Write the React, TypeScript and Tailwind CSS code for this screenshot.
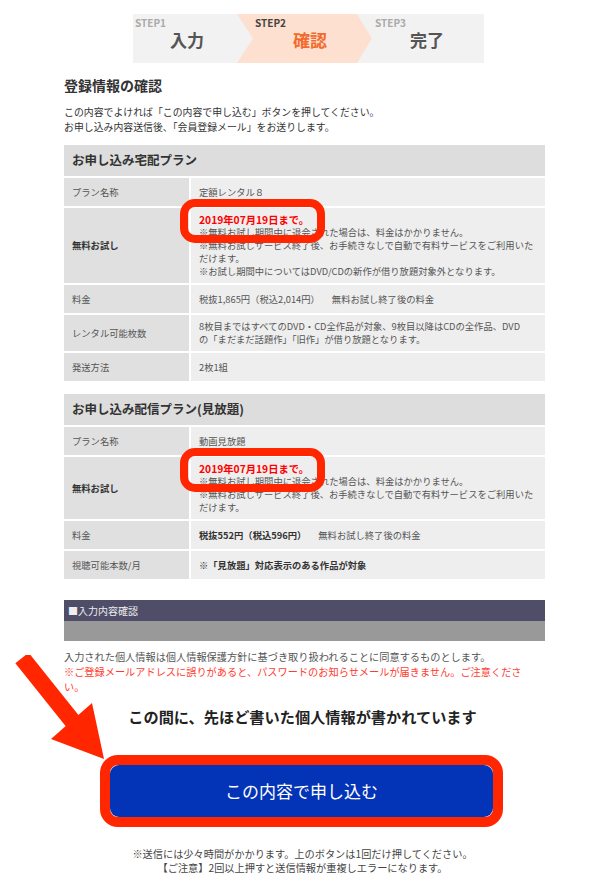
import React from 'react';

const font = { fontFamily: '"Noto Sans CJK JP", "Liberation Sans", sans-serif' };

type Row = { label: string; boldLabel?: boolean; value: React.ReactNode; mark?: boolean };

const DateMark: React.FC = () => (
  <div className="absolute -left-[11px] -top-[9px] w-[145px] h-[44px] border-[8px] border-[#ff2600] rounded-[15px] pointer-events-none" />
);

const PlanTable: React.FC<{ title: string; rows: Row[] }> = ({ title, rows }) => (
  <div className="flex flex-col gap-[2px]">
    <div className="h-[31px] bg-[#dddddd] flex items-center px-2 text-[12.5px] font-bold text-[#333]">{title}</div>
    {rows.map((row, i) => (
      <div key={i} className="flex gap-[2px]">
        <div
          className={`w-[125px] shrink-0 bg-[#e0e0e0] flex items-center px-2 min-h-[28px] text-[9.3px] leading-[13px] ${
            row.boldLabel ? 'font-bold text-[#333]' : 'text-[#555]'
          }`}
        >
          {row.label}
        </div>
        <div className="relative flex-1 bg-[#eeeeee] flex items-center px-2 py-[5px] min-h-[28px] text-[9.3px] leading-[13px] text-[#555]">
          <div>{row.value}</div>
          {row.mark && <DateMark />}
        </div>
      </div>
    ))}
  </div>
);

export default function App() {
  const red = <div className="text-[#ff0000] font-bold text-[10.3px]">2019年07月19日まで。</div>;

  return (
    <div className="relative w-full min-h-screen bg-white" style={font}>
      {/* steps */}
      <div className="pt-[14px] pl-[133px]">
        <div className="flex w-[351px] h-[49px] bg-[#f2f2f2]">
          <div className="w-[104px] pl-[2px]">
            <div className="flex flex-col h-full">
              <div className="text-[10px] font-bold pt-[2px] leading-[13px] text-[#aaa]">STEP1</div>
              <div className="text-[17px] leading-[22px] font-bold text-[#555] pl-[35px]">入力</div>
            </div>
          </div>
          <div className="w-[135px] bg-[#fde0d0] pl-[18px] [clip-path:polygon(0_0,120px_0,100%_50%,120px_100%,0_100%,16px_50%)]">
            <div className="flex flex-col h-full">
              <div className="text-[10px] font-bold pt-[2px] leading-[13px] text-[#444]">STEP2</div>
              <div className="text-[17px] leading-[22px] font-bold text-[#f26a2c] pl-[38px]">確認</div>
            </div>
          </div>
          <div className="flex-1 pl-[3px]">
            <div className="flex flex-col h-full">
              <div className="text-[10px] font-bold pt-[2px] leading-[13px] text-[#aaa]">STEP3</div>
              <div className="text-[17px] leading-[22px] font-bold text-[#555] pl-[35px]">完了</div>
            </div>
          </div>
        </div>
      </div>

      <div className="ml-[64px] w-[481px]">
        <h1 className="mt-[12px] text-[14px] leading-[20px] font-bold text-[#333]">登録情報の確認</h1>
        <p className="mt-[10px] text-[9.9px] leading-[15px] text-[#333]">
          この内容でよければ「この内容で申し込む」ボタンを押してください。
          <br />
          お申し込み内容送信後、「会員登録メール」をお送りします。
        </p>

        <div className="mt-[10px]">
          <PlanTable
            title="お申し込み宅配プラン"
            rows={[
              { label: 'プラン名称', value: '定額レンタル８' },
              {
                label: '無料お試し',
                boldLabel: true,
                mark: true,
                value: (
                  <>
                    {red}
                    <div>※無料お試し期間中に退会された場合は、料金はかかりません。</div>
                    <div>※無料お試しサービス終了後、お手続きなしで自動で有料サービスをご利用いただけます。</div>
                    <div>※お試し期間中についてはDVD/CDの新作が借り放題対象外となります。</div>
                  </>
                ),
              },
              {
                label: '料金',
                value: (
                  <>
                    税抜1,865円（税込2,014円）<span className="ml-[12px]">無料お試し終了後の料金</span>
                  </>
                ),
              },
              {
                label: 'レンタル可能枚数',
                value: (
                  <>
                    8枚目まではすべてのDVD・CD全作品が対象、9枚目以降はCDの全作品、DVD
                    <br />
                    の「まだまだ話題作」「旧作」が借り放題となります。
                  </>
                ),
              },
              { label: '発送方法', value: '2枚1組' },
            ]}
          />
        </div>

        <div className="mt-[13px]">
          <PlanTable
            title="お申し込み配信プラン(見放題)"
            rows={[
              { label: 'プラン名称', value: '動画見放題' },
              {
                label: '無料お試し',
                boldLabel: true,
                mark: true,
                value: (
                  <>
                    {red}
                    <div>※無料お試し期間中に退会された場合は、料金はかかりません。</div>
                    <div>※無料お試しサービス終了後、お手続きなしで自動で有料サービスをご利用いただけます。</div>
                  </>
                ),
              },
              {
                label: '料金',
                value: (
                  <>
                    <span className="font-bold text-[#333]">税抜552円（税込596円）</span>
                    <span className="ml-[12px]">無料お試し終了後の料金</span>
                  </>
                ),
              },
              {
                label: '視聴可能本数/月',
                value: <span className="font-bold text-[#333]">※「見放題」対応表示のある作品が対象</span>,
              },
            ]}
          />
        </div>

        <div className="mt-[21px]">
          <div className="h-[21px] bg-[#4f4d68] flex items-center pl-[4px] text-[10px] text-[#eee]">■入力内容確認</div>
          <div className="h-[20px] bg-[#999999]" />
        </div>

        <p className="mt-[8px] text-[10.2px] leading-[15px] text-[#555]">
          入力された個人情報は個人情報保護方針に基づき取り扱われることに同意するものとします。
          <br />
          <span className="text-[#ff3b30]">
            ※ご登録メールアドレスに誤りがあると、パスワードのお知らせメールが届きません。ご注意くださ
            <br />
            い。
          </span>
        </p>
      </div>

      <div className="mt-[12px] text-center text-[15.2px] leading-[20px] font-bold text-[#222] pl-[4px]">
        この間に、先ほど書いた個人情報が書かれています
      </div>

      <div className="mt-[29px] ml-[100px] w-[403px] border-[10px] border-[#ff2600] rounded-[18px]">
        <button className="w-full h-[52px] bg-[#0333b6] rounded-[9px] text-white text-[17px] flex items-center justify-center">
          この内容で申し込む
        </button>
      </div>

      <div className="mt-[20px] text-center text-[10.2px] leading-[14px] text-[#444] pl-[4px] pb-[20px]">
        ※送信には少々時間がかかります。上のボタンは1回だけ押してください。
        <br />
        【ご注意】2回以上押すと送信情報が重複しエラーになります。
      </div>

      {/* annotation arrow */}
      <svg className="absolute left-0 top-[655px] pointer-events-none" width="120" height="115" viewBox="0 655 120 115">
        <line x1="22" y1="658" x2="74" y2="723" stroke="#ff2600" strokeWidth="17" />
        <polygon points="51,739 92,703 104,759" fill="#ff2600" />
      </svg>
    </div>
  );
}
